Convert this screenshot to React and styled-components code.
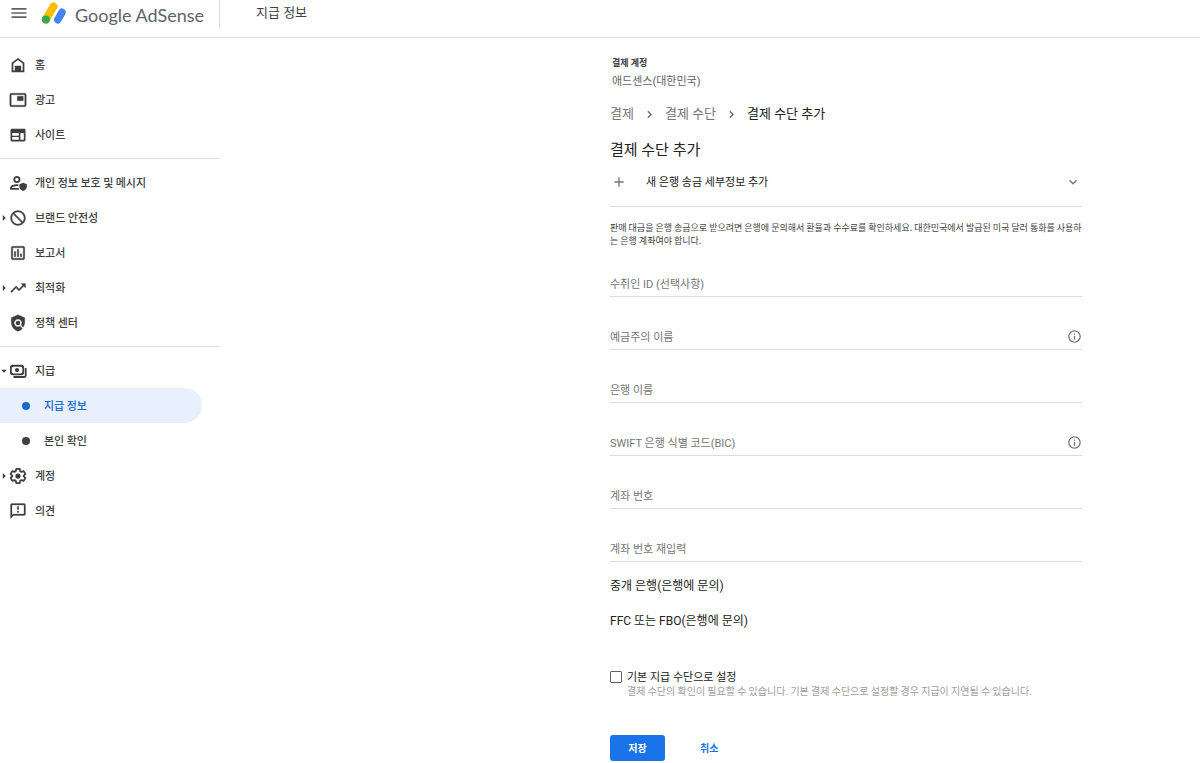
import { useState } from "react";
import styled, { createGlobalStyle } from "styled-components";
import {
  MdAdd,
  MdArrowDropDown,
  MdArrowRight,
  MdChevronRight,
  MdExpandMore,
  MdInfoOutline,
  MdMenu,
  MdNotInterested,
  MdOutlineAssessment,
  MdOutlineFeedback,
  MdPictureInPicture,
  MdPolicy,
  MdTrendingUp,
} from "react-icons/md";

function HomeIcon() {
  return (
    <svg viewBox="0 0 24 24" width="18" height="18" fill="currentColor">
      <path d="M12 2.500 3.500 9v12.500h17V9L12 2.500zm0 2.800 6.200 4.800v9.200h-2v-6.200H7.800v6.200h-2v-9.200z" />
      <path d="M8.800 13.500h6.400v6H8.800z" />
    </svg>
  );
}

function SiteIcon() {
  return (
    <svg viewBox="0 0 24 24" width="18" height="18" fill="currentColor">
      <path d="M20.300 3.500H3.700c-1 0-1.700.8-1.700 1.800v13.400c0 1 .7 1.800 1.700 1.800h16.600c1 0 1.700-.8 1.700-1.800V5.300c0-1-.7-1.800-1.700-1.800zM13 18.200H4.300v-3.400H13v3.400zm0-5.200H4.300V9.400H13V13zm6.700 5.200h-4.500V9.400h4.500v8.800z" />
    </svg>
  );
}

function PrivacyIcon() {
  return (
    <svg viewBox="0 0 24 24" width="18" height="18" fill="currentColor">
      <path d="M10.500 2.500a4.700 4.700 0 1 0 0 9.400 4.700 4.700 0 0 0 0-9.400zm0 2.400a2.300 2.300 0 1 1 0 4.600 2.300 2.300 0 0 1 0-4.600z" />
      <path d="M12.500 13.900c-.8-.1-1.400-.1-2-.1-3.500 0-9 1.500-9 4.800V21h12.500c-.7-.7-1.100-1.400-1.300-2.300H3.800c.2-1 3.700-2.600 6.700-2.600.8 0 1.400.1 2 .2z" />
      <path d="m18.800 11.500-5 2v3.300c0 2.800 2.100 5.200 5 5.900 2.900-.7 5-3.100 5-5.900v-3.300z" />
    </svg>
  );
}

function PaymentsIcon() {
  return (
    <svg viewBox="0 0 24 24" width="18" height="18">
      <g fill="none" stroke="currentColor" strokeWidth="2.400">
        <rect x="2.500" y="5" width="16.500" height="11.500" rx="2.500" />
        <path fill="none" d="M22.300 8v10c0 1.200-.8 2-2 2H6" />
      </g>
      <circle cx="10.700" cy="10.700" r="2.800" fill="currentColor" />
      <path d="M3 5h3.500L3 8.500zM18.500 5H15l3.500 3.500zM3 16.500h3.500L3 13zM18.500 16.500H15l3.500-3.500z" fill="currentColor" />
    </svg>
  );
}

function SettingsIcon() {
  return (
    <svg viewBox="0 0 24 24" width="18" height="18">
      <g fill="none" stroke="currentColor" strokeWidth="2.400" strokeLinejoin="round">
        <path fill="none" d="M9.700 2.500h4.600l.6 3 1.800 1 2.900-1 2.300 4-2.300 2v1l2.300 2-2.300 4-2.900-1-1.800 1-.6 3H9.700l-.6-3-1.800-1-2.900 1-2.300-4 2.300-2v-1l-2.300-2 2.300-4 2.900 1 1.800-1z" />
      </g>
      <circle cx="12" cy="12" r="3.500" fill="currentColor" />
    </svg>
  );
}

function AdSenseLogo() {
  return (
    <svg viewBox="0 0 26 25" width="26" height="25" fill="none" strokeLinecap="round">
      <path d="M4.900 17.500 12.500 4.500" stroke="#fbbc04" strokeWidth="8" />
      <path d="M16.800 17.700 21 10.300" stroke="#4285f4" strokeWidth="7.500" />
      <circle cx="4.900" cy="17.500" r="4" fill="#34a853" />
    </svg>
  );
}

const navGroups = [
  [
    { label: "홈", icon: <HomeIcon /> },
    { label: "광고", icon: <MdPictureInPicture /> },
    { label: "사이트", icon: <SiteIcon /> },
  ],
  [
    { label: "개인 정보 보호 및 메시지", icon: <PrivacyIcon /> },
    { label: "브랜드 안전성", icon: <MdNotInterested />, arrow: "right" },
    { label: "보고서", icon: <MdOutlineAssessment /> },
    { label: "최적화", icon: <MdTrendingUp />, arrow: "right" },
    { label: "정책 센터", icon: <MdPolicy /> },
  ],
  [
    { label: "지급", icon: <PaymentsIcon />, arrow: "down" },
    { label: "지급 정보", sub: true, active: true },
    { label: "본인 확인", sub: true },
    { label: "계정", icon: <SettingsIcon />, arrow: "right" },
    { label: "의견", icon: <MdOutlineFeedback /> },
  ],
];

const fields = [
  { name: "payeeId", label: "수취인 ID (선택사항)" },
  { name: "holderName", label: "예금주의 이름", info: true },
  { name: "bankName", label: "은행 이름" },
  { name: "swift", label: "SWIFT 은행 식별 코드(BIC)", info: true },
  { name: "accountNumber", label: "계좌 번호" },
  { name: "accountNumberRepeat", label: "계좌 번호 재입력" },
];

export default function App() {
  const [bankDetails, setBankDetails] = useState({});
  const [isDefault, setIsDefault] = useState(false);

  function updateBankDetails(event) {
    setBankDetails({
      ...bankDetails,
      [event.target.name]: event.target.value,
    });
  }

  return (
    <>
      <GlobalStyle />
      <Header>
        <MenuButton type="button" aria-label="메뉴">
          <MdMenu />
        </MenuButton>
        <Brand href="#home">
          <AdSenseLogo />
          <BrandName>Google AdSense</BrandName>
        </Brand>
        <PageName>지급 정보</PageName>
      </Header>
      <Body>
        <Sidebar>
          {navGroups.map((group, index) => (
            <NavGroup key={index}>
              {group.map((item) => (
                <li key={item.label}>
                  <NavLink href="#nav" $active={item.active}>
                    <NavArrow>
                      {item.arrow === "right" && <MdArrowRight />}
                      {item.arrow === "down" && <MdArrowDropDown />}
                    </NavArrow>
                    {item.sub ? <Dot /> : <NavIcon>{item.icon}</NavIcon>}
                    <NavText>{item.label}</NavText>
                  </NavLink>
                </li>
              ))}
            </NavGroup>
          ))}
        </Sidebar>
        <Main>
          <PaymentForm onSubmit={(event) => event.preventDefault()}>
            <AccountTitle>결제 계정</AccountTitle>
            <AccountName>애드센스(대한민국)</AccountName>
            <Breadcrumbs>
              <Crumb href="#payments">결제</Crumb>
              <MdChevronRight />
              <Crumb href="#methods">결제 수단</Crumb>
              <MdChevronRight />
              <CurrentCrumb>결제 수단 추가</CurrentCrumb>
            </Breadcrumbs>
            <Title>결제 수단 추가</Title>
            <MethodToggle type="button">
              <MdAdd size={16} />
              <span>새 은행 송금 세부정보 추가</span>
              <MdExpandMore size={16} />
            </MethodToggle>
            <Notice>
              판매 대금을 은행 송금으로 받으려면 은행에 문의해서 환율과 수수료를
              확인하세요. 대한민국에서 발급된 미국 달러 통화를 사용하는 은행
              계좌여야 합니다.
            </Notice>
            <Fields>
              {fields.map((field) => (
                <Field key={field.name}>
                  <FieldLabel htmlFor={field.name}>{field.label}</FieldLabel>
                  <FieldInput
                    type="text"
                    id={field.name}
                    name={field.name}
                    value={bankDetails[field.name] || ""}
                    onChange={updateBankDetails}
                  />
                  {field.info && <MdInfoOutline />}
                </Field>
              ))}
            </Fields>
            <Sections>
              <SectionButton type="button">
                중개 은행(은행에 문의)
              </SectionButton>
              <SectionButton type="button">
                FFC 또는 FBO(은행에 문의)
              </SectionButton>
            </Sections>
            <DefaultMethod>
              <Checkbox
                type="checkbox"
                id="default"
                checked={isDefault}
                onChange={() => setIsDefault(!isDefault)}
              />
              <div>
                <DefaultLabel htmlFor="default">
                  기본 지급 수단으로 설정
                </DefaultLabel>
                <DefaultHint>
                  결제 수단의 확인이 필요할 수 있습니다. 기본 결제 수단으로
                  설정할 경우 지급이 지연될 수 있습니다.
                </DefaultHint>
              </div>
            </DefaultMethod>
            <Actions>
              <SaveButton>저장</SaveButton>
              <CancelButton type="button">취소</CancelButton>
            </Actions>
          </PaymentForm>
        </Main>
      </Body>
    </>
  );
}

const GlobalStyle = createGlobalStyle`
  * {
    box-sizing: border-box;
  }

  body {
    margin: 0;
    background-color: white;
    color: #3c4043;
    font-family: Roboto, "Noto Sans CJK KR", sans-serif;
    font-size: 11px;
  }

  svg {
    flex-shrink: 0;
  }

  button, input {
    font-family: inherit;
  }
`;

const Header = styled.header`
  display: flex;
  align-items: flex-start;
  height: 38px;
  border-bottom: 1px solid #dadce0;
`;

const MenuButton = styled.button`
  display: flex;
  border: none;
  background: none;
  color: #5f6368;
  cursor: pointer;
  font-size: 20px;
  margin-left: 9px;
  padding: 3px 0;
`;

const Brand = styled.a`
  display: flex;
  align-items: center;
  width: 179px;
  height: 29px;
  margin-left: 12px;
  border-right: 1px solid #dadce0;
  color: #5f6368;
  gap: 8px;
  text-decoration: none;
`;

const BrandName = styled.span`
  font-family: Lato, sans-serif;
  font-size: 18px;
  white-space: nowrap;
`;

const PageName = styled.span`
  color: #3c4043;
  font-size: 13px;
  line-height: 26px;
  margin-left: 36px;
`;

const Body = styled.div`
  display: flex;
`;

const Sidebar = styled.nav`
  flex: 0 0 220px;
  padding-top: 9px;
`;

const NavGroup = styled.ul`
  list-style: none;
  margin: 0;
  padding: 0;

  & + & {
    border-top: 1px solid #dadce0;
    margin-top: 6px;
    padding-top: 6px;
  }
`;

const NavLink = styled.a`
  display: flex;
  align-items: center;
  width: 202px;
  height: 35px;
  border-radius: 0 18px 18px 0;
  background-color: ${({ $active }) => ($active ? "#e8f0fe" : "transparent")};
  color: ${({ $active }) => ($active ? "#1967d2" : "#3c4043")};
  font-weight: 500;
  text-decoration: none;
`;

const NavArrow = styled.span`
  display: flex;
  justify-content: center;
  width: 8px;
  font-size: 14px;
`;

const NavIcon = styled.span`
  display: flex;
  font-size: 18px;
  margin: 0 8px 0 1px;

  path:not([fill="none"]) {
    stroke-width: 0.4;
  }
`;

const NavText = styled.span`
  font-family: "Noto Sans CJK KR", sans-serif;
  padding-bottom: 2px;
`;

const Dot = styled.span`
  width: 8px;
  height: 8px;
  border-radius: 50%;
  background-color: currentColor;
  margin: 0 14px;
`;

const Main = styled.main`
  display: flex;
  flex: 1;
  justify-content: flex-end;
  padding: 18px 118px 0 0;
`;

const PaymentForm = styled.form`
  width: 472px;
`;

const AccountTitle = styled.h4`
  font-size: 9px;
  line-height: 14px;
  margin: 0 2px;
`;

const AccountName = styled.p`
  line-height: 16px;
  margin: 4px 2px 0;
  color: #5f6368;
`;

const Breadcrumbs = styled.nav`
  display: flex;
  align-items: center;
  color: #5f6368;
  font-size: 13px;
  gap: 8px;
  line-height: 20px;
  margin-top: 14px;

  svg {
    font-size: 15px;
  }
`;

const Crumb = styled.a`
  color: #757575;
  text-decoration: none;
`;

const CurrentCrumb = styled.span`
  color: #212121;
`;

const Title = styled.h1`
  color: #212121;
  font-size: 15px;
  font-weight: 400;
  line-height: 24px;
  margin: 14px 0 0;
`;

const MethodToggle = styled.button`
  display: flex;
  align-items: center;
  width: 100%;
  height: 45px;
  border: none;
  border-bottom: 1px solid #dadce0;
  background: none;
  color: #757575;
  cursor: pointer;
  font-size: 11px;
  gap: 19px;
  padding: 0 1px 4px;

  span {
    flex: 1;
    color: #212121;
    padding-bottom: 2px;
    text-align: left;
  }
`;

const Notice = styled.p`
  color: #424242;
  font-family: "Noto Sans CJK KR", sans-serif;
  font-size: 9px;
  line-height: 13px;
  margin: 14px 0 0;
`;

const Fields = styled.div`
  display: flex;
  flex-direction: column;
  gap: 27px;
  margin-top: 24px;
`;

const Field = styled.div`
  display: flex;
  align-items: center;
  height: 26px;
  border-bottom: 1px solid #dadce0;
  color: #757575;

  svg {
    font-size: 15px;
  }
`;

const FieldLabel = styled.label`
  padding-bottom: 2px;
`;

const FieldInput = styled.input`
  flex: 1;
  min-width: 0;
  border: none;
  background: none;
  color: #212121;
  font-size: 11px;
  outline: none;
  padding: 0 8px;
`;

const Sections = styled.div`
  display: flex;
  flex-direction: column;
  align-items: flex-start;
  gap: 15px;
  margin-top: 14px;
`;

const SectionButton = styled.button`
  border: none;
  background: none;
  color: #212121;
  cursor: pointer;
  font-size: 12px;
  line-height: 20px;
  padding: 0;
`;

const DefaultMethod = styled.div`
  display: flex;
  gap: 5px;
  margin-top: 40px;
`;

const Checkbox = styled.input`
  appearance: none;
  width: 12px;
  height: 12px;
  border: 1px solid #5f6368;
  border-radius: 1px;
  margin: 0;

  &:checked {
    background-color: #1a73e8;
  }
`;

const DefaultLabel = styled.label`
  display: block;
  color: #212121;
  line-height: 13px;
`;

const DefaultHint = styled.p`
  color: #9e9e9e;
  font-family: "Noto Sans CJK KR", sans-serif;
  font-size: 10px;
  line-height: 13px;
  margin: 0;
`;

const Actions = styled.div`
  display: flex;
  gap: 20px;
  margin-top: 38px;
`;

const SaveButton = styled.button`
  width: 55px;
  height: 26px;
  border: none;
  border-radius: 3px;
  background-color: #1a73e8;
  color: white;
  cursor: pointer;
  font-size: 10px;
  font-weight: 700;
  padding: 0 0 2px;
`;

const CancelButton = styled.button`
  border: none;
  background: none;
  color: #1a73e8;
  cursor: pointer;
  font-size: 10px;
  font-weight: 700;
  padding: 0 15px 2px;
`;
